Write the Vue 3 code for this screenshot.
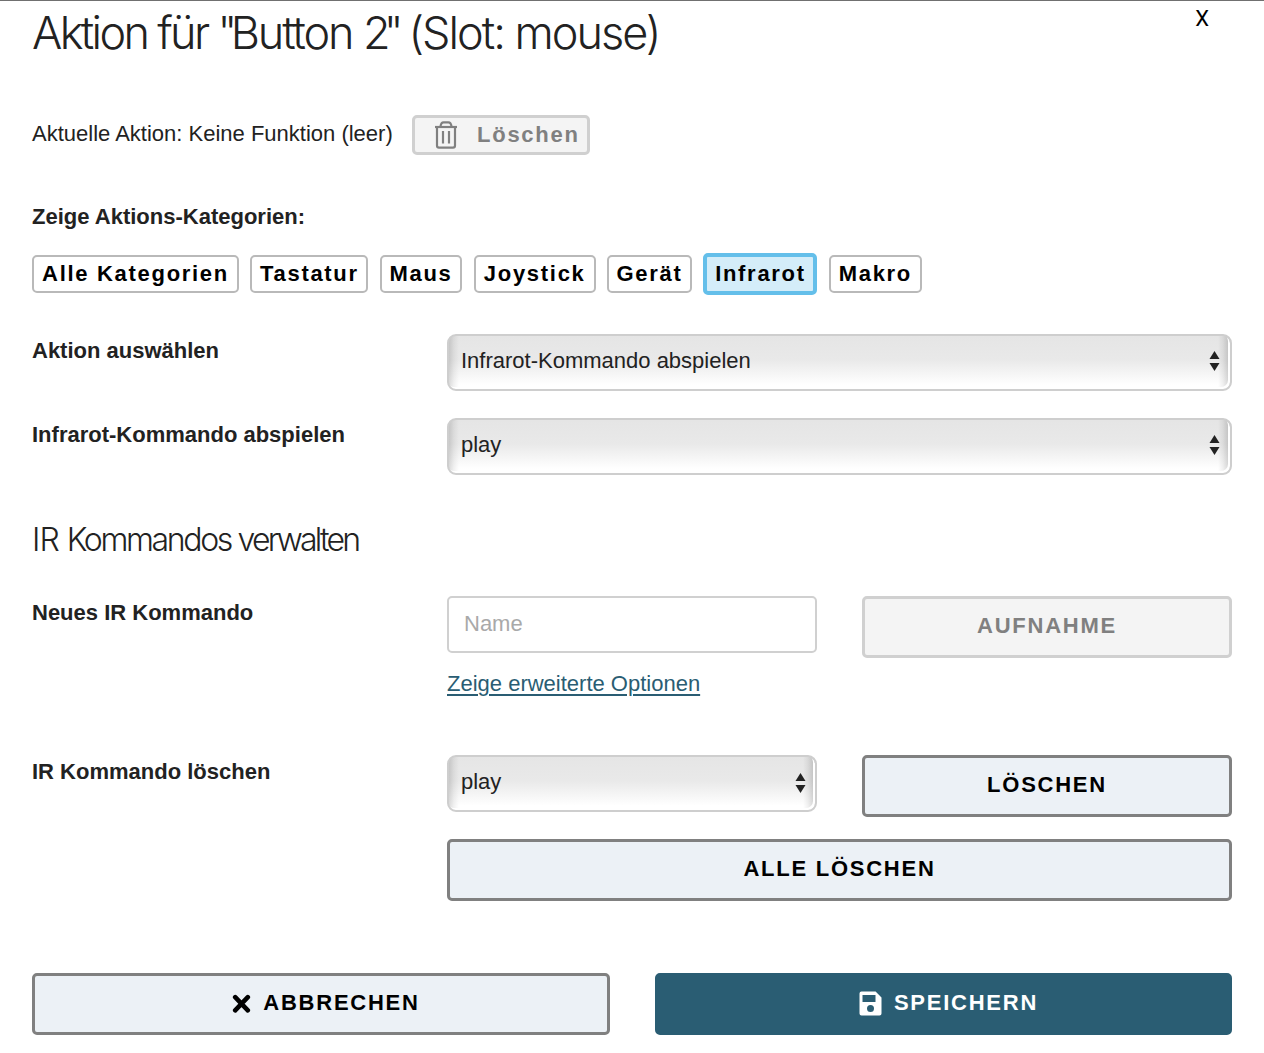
<script setup>
import { ref } from 'vue'

const categories = [
  { name: 'Alle Kategorien', width: 207 },
  { name: 'Tastatur', width: 118 },
  { name: 'Maus', width: 82.5 },
  { name: 'Joystick', width: 122 },
  { name: 'Gerät', width: 85 },
  { name: 'Infrarot', width: 114 },
  { name: 'Makro', width: 93 }
]
const active = ref('Infrarot')
</script>

<template>
  <main class="modal">
    <header class="head">
      <h1>Aktion für <span class="quote">"</span><span class="name">Button </span><span class="digit">2</span><span class="quote-end">"</span> <span class="slot">(Slot: mouse)</span></h1>
      <a class="close">X</a>
    </header>

    <div class="current">
      <span class="current-text">Aktuelle Aktion: Keine Funktion (leer)</span>
      <button class="btn disabled small">
        <svg class="trash" viewBox="0 0 24 28" fill="none" stroke="currentColor">
          <path d="M1 6H23" stroke-width="2.2" />
          <path d="M6.5 5.5Q7 1.3 9.6 1.3H14.4Q17 1.3 17.5 5.5" stroke-width="2.2" />
          <path d="M3 6V24.4Q3 26.6 5 26.6H19Q21 26.6 21 24.4V6" stroke-width="2.2" />
          <path d="M9 10V22.5M15 10V22.5" stroke-width="2.2" />
        </svg>
        <span>Löschen</span>
      </button>
    </div>

    <div class="strong cat-title">Zeige Aktions-Kategorien:</div>
    <div class="chips">
      <button
        v-for="c in categories"
        :key="c.name"
        class="chip"
        :class="{ active: c.name === active }"
        :style="{ width: c.width + 'px' }"
        @click="active = c.name"
      >{{ c.name }}</button>
    </div>

    <div class="row first">
      <label class="strong">Aktion auswählen</label>
      <div class="select wide">
        <span>Infrarot-Kommando abspielen</span>
        <svg class="arrows" viewBox="0 0 10 20"><path d="M5 0L10 8H0ZM0 12H10L5 20Z" /></svg>
      </div>
    </div>
    <div class="row second">
      <label class="strong">Infrarot-Kommando abspielen</label>
      <div class="select wide">
        <span>play</span>
        <svg class="arrows" viewBox="0 0 10 20"><path d="M5 0L10 8H0ZM0 12H10L5 20Z" /></svg>
      </div>
    </div>

    <h2><span class="ir">IR </span>Kommandos <span class="verb">verwalten</span></h2>

    <div class="row new">
      <label class="strong">Neues IR Kommando</label>
      <div class="field">
        <input type="text" placeholder="Name" />
        <a class="link">Zeige erweiterte Optionen</a>
      </div>
      <button class="btn disabled half">AUFNAHME</button>
    </div>

    <div class="row remove">
      <label class="strong">IR Kommando löschen</label>
      <div class="select half">
        <span>play</span>
        <svg class="arrows" viewBox="0 0 10 20"><path d="M5 0L10 8H0ZM0 12H10L5 20Z" /></svg>
      </div>
      <button class="btn half">LÖSCHEN</button>
      <button class="btn all">ALLE LÖSCHEN</button>
    </div>

    <footer class="actions">
      <button class="btn">
        <svg class="cross" viewBox="0 0 18 20"><path d="M3 4L15 16.5M15 4L3 16.5" fill="none" stroke="currentColor" stroke-width="4.4" stroke-linecap="round" /></svg>
        <span>ABBRECHEN</span>
      </button>
      <button class="btn primary">
        <svg class="disk" viewBox="0 0 23 25">
          <path fill="currentColor" fill-rule="evenodd" d="M2.5 .5H16.6L22.5 6.4V22.5Q22.5 24.5 20.5 24.5H2.5Q.5 24.5 .5 22.5V2.5Q.5 .5 2.5 .5ZM3.5 4V11H16.5V4ZM11.5 14A3.5 3.5 0 1 0 11.5 21A3.5 3.5 0 1 0 11.5 14Z" />
        </svg>
        <span>SPEICHERN</span>
      </button>
    </footer>
  </main>
</template>

<style>
body {
  margin: 0;
  background: #fff;
}
</style>

<style scoped>
* {
  box-sizing: border-box;
}
.modal {
  height: 1053px;
  padding: 0 32px;
  overflow: hidden;
  border-top: 1px solid #707070;
  background: #fff;
  color: #222;
  font: 22px/32px "Liberation Sans", Arial, sans-serif;
}
.head {
  display: flex;
  justify-content: space-between;
  height: 114px;
}
h1,
h2 {
  margin: 0;
  font-family: Inter, "Liberation Sans", sans-serif;
  font-weight: 300;
  white-space: nowrap;
}
h1 {
  font-size: 45px;
  line-height: 64px;
  letter-spacing: -2.65px;
}
.quote {
  letter-spacing: -6.6px;
}
.name {
  letter-spacing: -2.1px;
}
.digit {
  letter-spacing: -7px;
}
.quote-end {
  letter-spacing: -5px;
}
.slot {
  letter-spacing: -2px;
}
.ir {
  letter-spacing: -1px;
}
.verb {
  letter-spacing: -2.8px;
}
.close {
  margin-right: 23px;
  color: #000;
  font-family: Roboto, sans-serif;
  font-size: 22px;
  line-height: 35px;
}
.current {
  display: flex;
  align-items: center;
  height: 40px;
}
.current-text {
  width: 380px;
  padding-bottom: 3px;
  white-space: nowrap;
}
.strong {
  font-weight: bold;
}
.btn {
  display: flex;
  align-items: center;
  justify-content: center;
  height: 62px;
  padding: 0 0 2px;
  border: 3px solid #808080;
  border-radius: 5px;
  background: #ecf1f6;
  color: #000;
  font: bold 22px/30px "Liberation Sans", Arial, sans-serif;
  letter-spacing: 1.75px;
  white-space: nowrap;
}
.btn.disabled {
  border-color: #d0d0d0;
  background: #f4f4f4;
  color: #808080;
}
.btn.small {
  width: 178px;
  height: 40px;
  justify-content: flex-start;
  padding: 0 0 0 19px;
}
.trash {
  width: 24px;
  height: 28px;
  margin: 0 19px 0 0;
}
.cat-title {
  margin-top: 46px;
  height: 52px;
}
.chips {
  display: flex;
  align-items: center;
  gap: 11.4px;
  height: 42px;
}
.chip {
  display: flex;
  flex: none;
  align-items: center;
  justify-content: center;
  height: 38px;
  padding: 0;
  border: 2px solid #b9b9b9;
  border-radius: 5px;
  background: #fff;
  color: #000;
  font: bold 22px/30px "Liberation Sans", Arial, sans-serif;
  letter-spacing: 1.7px;
  white-space: nowrap;
}
.chip.active {
  height: 42px;
  border: 4px solid #64bfea;
  background: #d4edf9;
}
.row {
  display: grid;
  grid-template-columns: 370px 370px 370px;
  column-gap: 45px;
  align-items: start;
}
.row label {
  padding-top: 1px;
}
.first {
  margin-top: 39px;
  height: 84px;
}
.second {
  height: 84px;
}
.wide,
.all {
  grid-column: 2 / 4;
}
.select {
  display: flex;
  align-items: center;
  justify-content: space-between;
  height: 57px;
  padding: 0 10.5px 4px 12px;
  border: 2px solid #cecece;
  border-radius: 9px;
  background:
    linear-gradient(90deg, rgba(0, 0, 0, .14), rgba(0, 0, 0, .05) 5px, transparent 10px),
    linear-gradient(270deg, rgba(0, 0, 0, .15) 2px, rgba(0, 0, 0, .06) 7px, transparent 12px),
    linear-gradient(#e5e5e5, #e9e9e9 45%, #fff 92%);
  box-shadow: inset -2px -2px 0 #fff;
}
.select.half {
  padding-right: 9.5px;
}
.arrows {
  width: 11px;
  height: 20px;
  margin-top: 1px;
  fill: #222;
}
.half .arrows {
  margin-top: 3px;
}
h2 {
  height: 94px;
  padding-top: 18px;
  font-size: 32px;
  line-height: 40px;
  letter-spacing: -2.35px;
}
.new {
  height: 159px;
}
.field {
  display: flex;
  flex-direction: column;
}
input {
  width: 100%;
  height: 57px;
  padding: 0 15px 2px;
  border: 2px solid #d0d0d0;
  border-radius: 5px;
  background: #fff;
  font: 22px/30px "Liberation Sans", Arial, sans-serif;
}
input::placeholder {
  color: #a9a9a9;
}
.link {
  margin-top: 15px;
  color: #2a5d73;
  text-decoration: underline;
  text-decoration-thickness: 1.5px;
  text-underline-offset: 3px;
}
.remove {
  grid-template-rows: 84px 62px;
}
.all {
  width: 100%;
}
.actions {
  display: grid;
  grid-template-columns: 578px 577px;
  gap: 45px;
  margin-top: 72px;
}
.actions .btn {
  padding-left: 10px;
}
.cross {
  width: 19px;
  height: 21px;
  margin: 1px 12px 0 0;
}
.disk {
  width: 23px;
  height: 25px;
  margin: 1px 12px 0 0;
}
.primary {
  border-color: #2a5d73;
  background: #2a5d73;
  color: #fff;
}
</style>
